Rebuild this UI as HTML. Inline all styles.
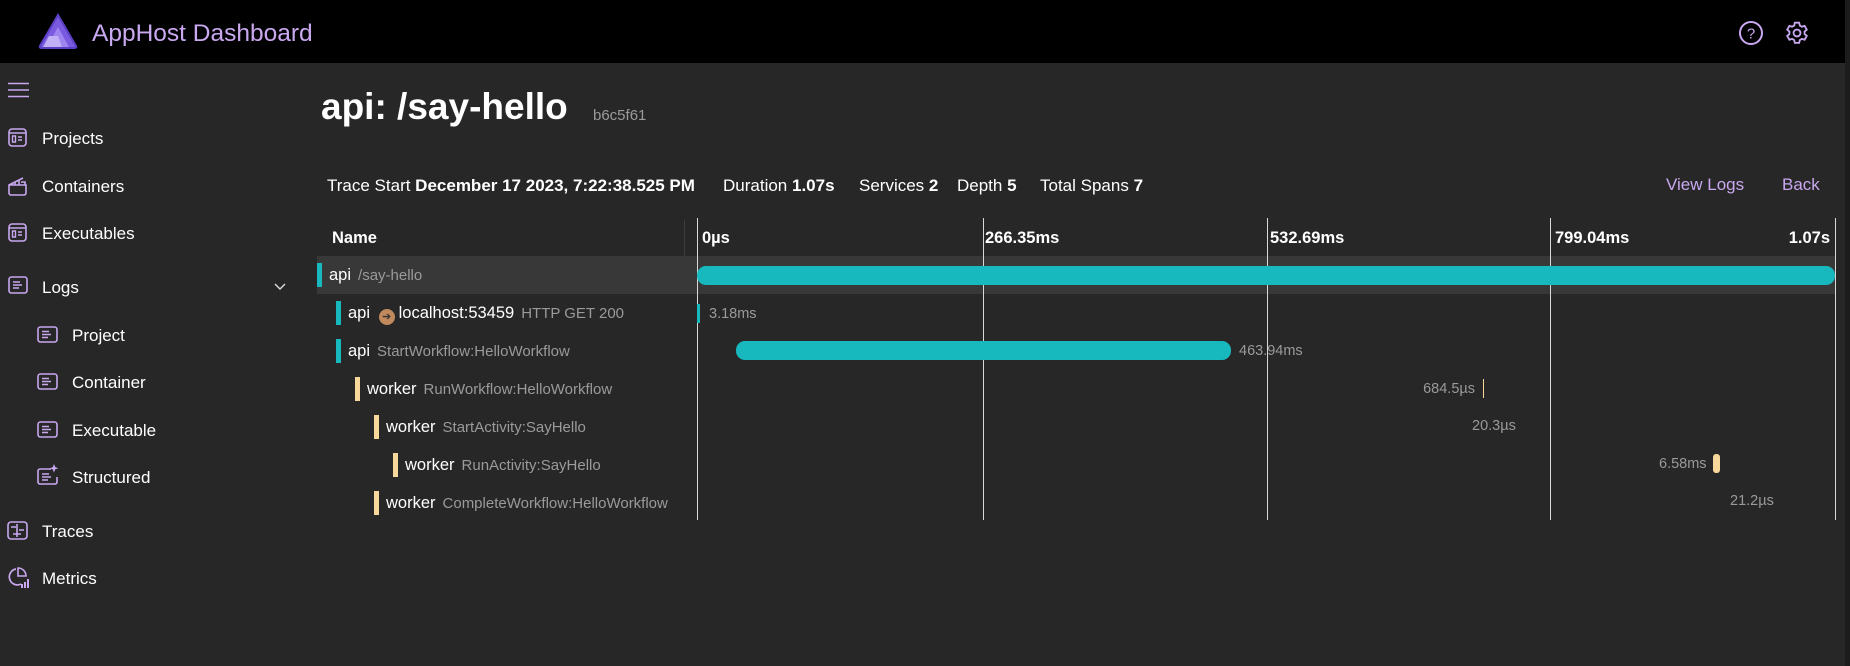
<!DOCTYPE html>
<html><head><meta charset="utf-8"><style>
*{margin:0;padding:0;box-sizing:border-box}
body{width:1850px;height:666px;background:#272727;font-family:"Liberation Sans",sans-serif;color:#fff;position:relative;overflow:hidden}
.a{position:absolute;white-space:nowrap}
.hdr{left:0;top:0;width:1850px;height:63px;background:#000}
.nav{font-size:17px;color:#fff;line-height:20px}
.ic{position:absolute}
.lav{color:#c9a8f0}
.g{color:#9a9a9a}
.vl{position:absolute;top:218px;width:1px;height:302px;background:#d8d8d8}
.row{position:absolute;left:317px;width:1518px;height:38px}
.mk{position:absolute;width:5px;height:24px;top:7px}
.t{position:absolute;top:9px;font-size:16.5px;white-space:nowrap;line-height:20px}
.t small{font-size:15px;color:#9a9a9a;margin-left:7px}
.d{position:absolute;font-size:14.5px;color:#9a9a9a;white-space:nowrap;line-height:16px}
.ti{position:absolute;top:176px;font-size:17px;white-space:nowrap}
</style></head><body>
<div class="a hdr"></div>
<div class="a" style="right:0;top:0;width:5px;height:666px;background:#1c1c1c"></div>
<svg class="ic" style="left:38px;top:13px" width="40" height="37" viewBox="0 0 40 37">
<path d="M20 2 L38 33 Q39 35 36 35 L4 35 Q1 35 2 33 Z" fill="#7a5be0" stroke="#5b3fc4" stroke-width="2"/>
<path d="M20 14 L31 34 L9 34 Z" fill="#9f85ef"/><path d="M11 23 L20 23 L24 34 L5 34Z" fill="#c2b0f7"/>
</svg>
<div class="a lav" style="left:92px;top:20px;font-size:24.5px">AppHost Dashboard</div>
<svg class="ic" style="left:1738px;top:20px" width="26" height="26" viewBox="0 0 26 26"><circle cx="13" cy="13" r="11" fill="none" stroke="#c9a8f0" stroke-width="2"/><text x="13" y="18.5" font-size="15" text-anchor="middle" fill="#c9a8f0" font-family="Liberation Sans">?</text></svg>
<svg class="ic" style="left:1784px;top:20px" width="26" height="26" viewBox="0 0 24 24"><path fill="none" stroke="#c9a8f0" stroke-width="1.7" d="M10 2.5h4l.6 2.6 1.9 1.1 2.5-.8 2 3.5-2 1.8v2.2l2 1.8-2 3.5-2.5-.8-1.900 1.1-.6 2.6h-4l-.6-2.6-1.9-1.1-2.5.8-2-3.5 2-1.8v-2.2l-2-1.8 2-3.5 2.5.8 1.9-1.1z"/><circle cx="12" cy="12" r="3.2" fill="none" stroke="#c9a8f0" stroke-width="1.7"/></svg>

<!-- sidebar -->
<svg class="ic" style="left:8px;top:82px" width="21" height="16"><path d="M0 1.5h21M0 8h21M0 14.5h21" stroke="#c9a8f0" stroke-width="1.6"/></svg>
<svg class="ic" style="left:8px;top:128px" width="19" height="19" viewBox="0 0 19 19"><rect x="1" y="1" width="17" height="17" rx="3" fill="none" stroke="#c9a8f0" stroke-width="1.6"/><path d="M1 5h17M4.5 8h3v6h-3zM10 9h4M10 12h4" fill="none" stroke="#c9a8f0" stroke-width="1.4"/></svg>
<div class="a nav" style="left:42px;top:129px">Projects</div>
<svg class="ic" style="left:7px;top:175px" width="21" height="21" viewBox="0 0 21 21"><path d="M2 10h17v8a2 2 0 0 1-2 2H4a2 2 0 0 1-2-2z M2 10l14-7 M8 7v3M12 5v5M14 7h4v3" fill="none" stroke="#c9a8f0" stroke-width="1.6"/></svg>
<div class="a nav" style="left:42px;top:177px">Containers</div>
<svg class="ic" style="left:8px;top:223px" width="19" height="19" viewBox="0 0 19 19"><rect x="1" y="1" width="17" height="17" rx="3" fill="none" stroke="#c9a8f0" stroke-width="1.6"/><path d="M1 5h17M4.5 8h3v6h-3zM10 9h4M10 12h4" fill="none" stroke="#c9a8f0" stroke-width="1.4"/></svg>
<div class="a nav" style="left:42px;top:224px">Executables</div>
<svg class="ic" style="left:8px;top:276px" width="20" height="18" viewBox="0 0 20 18"><rect x="1" y="1" width="18" height="16" rx="2.5" fill="none" stroke="#c9a8f0" stroke-width="1.6"/><path d="M5 6h7M5 9h9M5 12h6" stroke="#c9a8f0" stroke-width="1.4"/></svg>
<div class="a nav" style="left:42px;top:278px">Logs</div>
<svg class="ic" style="left:274px;top:283px" width="12" height="8"><path d="M1 1l5 5 5-5" fill="none" stroke="#ddd" stroke-width="1.4"/></svg>
<svg class="ic" style="left:37px;top:326px" width="21" height="17" viewBox="0 0 21 17"><rect x="1" y="1" width="19" height="15" rx="2.5" fill="none" stroke="#c9a8f0" stroke-width="1.6"/><path d="M5 5.5h7M5 8.5h9M5 11.5h6" stroke="#c9a8f0" stroke-width="1.4"/></svg>
<div class="a nav" style="left:72px;top:326px">Project</div>
<svg class="ic" style="left:37px;top:373px" width="21" height="17" viewBox="0 0 21 17"><rect x="1" y="1" width="19" height="15" rx="2.5" fill="none" stroke="#c9a8f0" stroke-width="1.6"/><path d="M5 5.5h7M5 8.5h9M5 11.5h6" stroke="#c9a8f0" stroke-width="1.4"/></svg>
<div class="a nav" style="left:72px;top:373px">Container</div>
<svg class="ic" style="left:37px;top:421px" width="21" height="17" viewBox="0 0 21 17"><rect x="1" y="1" width="19" height="15" rx="2.5" fill="none" stroke="#c9a8f0" stroke-width="1.6"/><path d="M5 5.5h7M5 8.5h9M5 11.5h6" stroke="#c9a8f0" stroke-width="1.4"/></svg>
<div class="a nav" style="left:72px;top:421px">Executable</div>
<svg class="ic" style="left:37px;top:464px" width="23" height="21" viewBox="0 0 23 21"><path d="M14 5H3a2 2 0 0 0-2 2v11a2 2 0 0 0 2 2h15a2 2 0 0 0 2-2v-5" fill="none" stroke="#c9a8f0" stroke-width="1.6"/><path d="M5 10h7M5 13h9M5 16h6" stroke="#c9a8f0" stroke-width="1.4"/><path d="M17 0l1.2 3 3 1.2-3 1.2L17 8.5l-1.2-3-3-1.2 3-1.2z" fill="#c9a8f0"/></svg>
<div class="a nav" style="left:72px;top:468px">Structured</div>
<svg class="ic" style="left:7px;top:521px" width="21" height="19" viewBox="0 0 21 19"><rect x="1" y="1" width="19" height="17" rx="3" fill="none" stroke="#c9a8f0" stroke-width="1.6"/><path d="M4 6h5M10 3v13M12 9h5M6 13h8" stroke="#c9a8f0" stroke-width="1.6"/></svg>
<div class="a nav" style="left:42px;top:522px">Traces</div>
<svg class="ic" style="left:7px;top:566px" width="23" height="23" viewBox="0 0 23 23"><path d="M9 3a8 8 0 1 0 5 15" fill="none" stroke="#c9a8f0" stroke-width="1.7"/><path d="M11 2v8h8a8 8 0 0 0-8-8z" fill="none" stroke="#c9a8f0" stroke-width="1.6"/><path d="M15 22v-4M18 22v-6M21 22v-9" stroke="#c9a8f0" stroke-width="2"/></svg>
<div class="a nav" style="left:42px;top:569px">Metrics</div>

<!-- main -->
<div class="a" style="left:321px;top:86px;font-size:37px;font-weight:bold">api: /say-hello</div>
<div class="a g" style="left:593px;top:107px;font-size:15px">b6c5f61</div>
<div class="ti" style="left:327px">Trace Start <b>December 17 2023, 7:22:38.525 PM</b></div>
<div class="ti" style="left:723px">Duration <b>1.07s</b></div>
<div class="ti" style="left:859px">Services <b>2</b></div>
<div class="ti" style="left:957px">Depth <b>5</b></div>
<div class="ti" style="left:1040px">Total Spans <b>7</b></div>
<div class="a lav" style="left:1666px;top:175px;font-size:17px">View Logs</div>
<div class="a lav" style="left:1782px;top:175px;font-size:17px">Back</div>

<div class="a" style="left:332px;top:229px;font-size:16.5px;font-weight:bold">Name</div>
<div class="a" style="left:684px;top:220px;width:1px;height:36px;background:#3c3c3c"></div>
<div class="a" style="left:702px;top:229px;font-size:16.5px;font-weight:bold">0µs</div>
<div class="a" style="left:985px;top:229px;font-size:16.5px;font-weight:bold">266.35ms</div>
<div class="a" style="left:1270px;top:229px;font-size:16.5px;font-weight:bold">532.69ms</div>
<div class="a" style="left:1555px;top:229px;font-size:16.5px;font-weight:bold">799.04ms</div>
<div class="a" style="left:1780px;top:229px;width:50px;text-align:right;font-size:16.5px;font-weight:bold">1.07s</div>

<div class="a" style="left:317px;top:256px;width:1518px;height:38px;background:#383838"></div>
<div class="vl" style="left:697px"></div><div class="vl" style="left:983px"></div><div class="vl" style="left:1267px"></div><div class="vl" style="left:1550px"></div><div class="vl" style="left:1835px"></div>

<div class="row" style="top:256px"><div class="mk" style="left:0;background:#17b8be"></div><div class="t" style="left:12px">api<small>/say-hello</small></div></div>
<div class="row" style="top:294px"><div class="mk" style="left:19px;background:#17b8be"></div><div class="t" style="left:31px">api <span style="display:inline-block;width:16px;height:16px;border-radius:50%;background:#c08a5c;color:#333;font-size:11px;text-align:center;line-height:16px;vertical-align:-2px;margin:0 4px">➔</span>localhost:53459<small>HTTP GET 200</small></div></div>
<div class="row" style="top:332px"><div class="mk" style="left:19px;background:#17b8be"></div><div class="t" style="left:31px">api<small>StartWorkflow:HelloWorkflow</small></div></div>
<div class="row" style="top:370px"><div class="mk" style="left:38px;background:#f8d89a"></div><div class="t" style="left:50px">worker<small>RunWorkflow:HelloWorkflow</small></div></div>
<div class="row" style="top:408px"><div class="mk" style="left:57px;background:#f8d89a"></div><div class="t" style="left:69px">worker<small>StartActivity:SayHello</small></div></div>
<div class="row" style="top:446px"><div class="mk" style="left:76px;background:#f8d89a"></div><div class="t" style="left:88px">worker<small>RunActivity:SayHello</small></div></div>
<div class="row" style="top:484px"><div class="mk" style="left:57px;background:#f8d89a"></div><div class="t" style="left:69px">worker<small>CompleteWorkflow:HelloWorkflow</small></div></div>

<div class="a" style="left:697px;top:266px;width:1138px;height:19px;border-radius:9px;background:#17b8be"></div>
<div class="a" style="left:697px;top:304px;width:3px;height:19px;background:#17b8be"></div>
<div class="d" style="left:709px;top:306px">3.18ms</div>
<div class="a" style="left:736px;top:341px;width:495px;height:19px;border-radius:9px;background:#17b8be"></div>
<div class="d" style="left:1239px;top:343px">463.94ms</div>
<div class="d" style="left:1400px;top:381px;width:75px;text-align:right">684.5µs</div>
<div class="a" style="left:1483px;top:379px;width:1px;height:19px;background:#f8d89a"></div>
<div class="d" style="left:1472px;top:418px">20.3µs</div>
<div class="d" style="left:1659px;top:456px">6.58ms</div>
<div class="a" style="left:1713px;top:454px;width:7px;height:19px;border-radius:3px;background:#f8d89a"></div>
<div class="d" style="left:1730px;top:493px">21.2µs</div>
</body></html>
